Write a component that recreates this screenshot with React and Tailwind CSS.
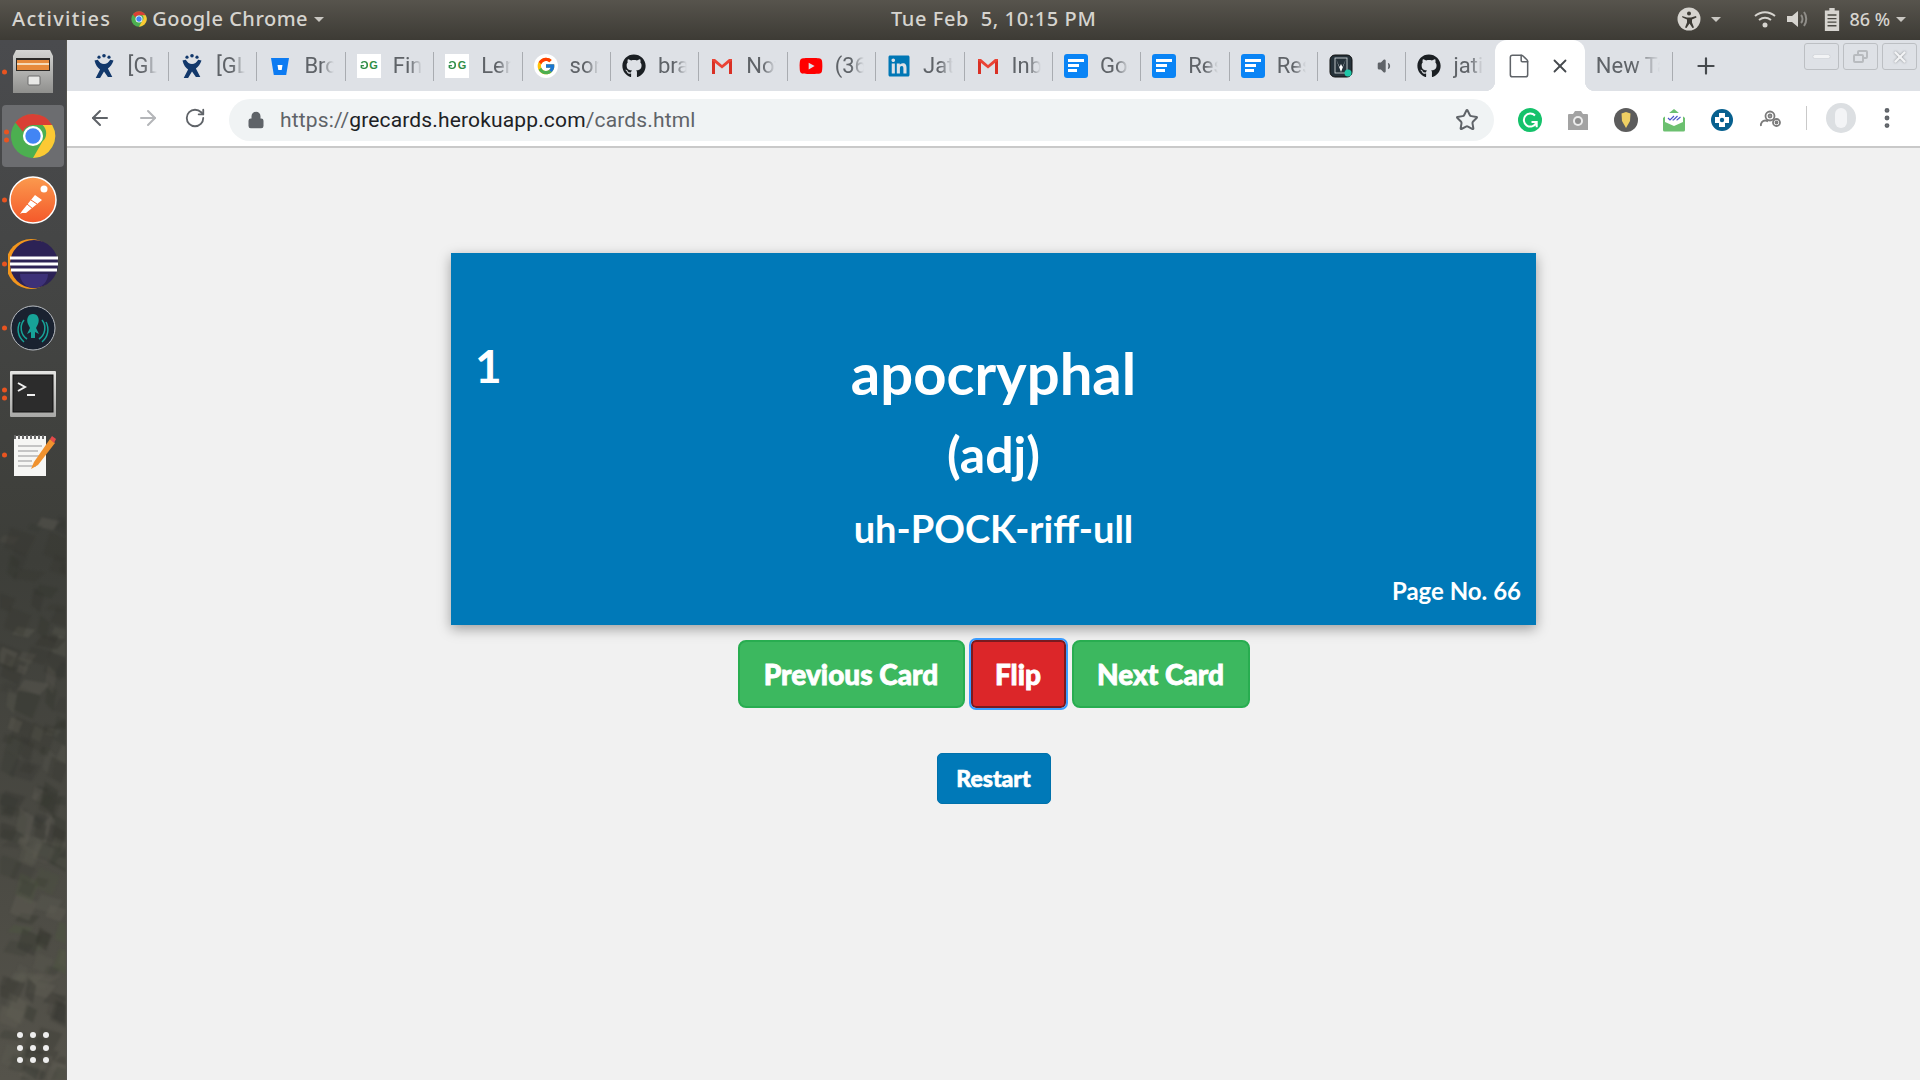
import React from 'react';
import { ArrowLeft, ArrowRight, RotateCw, Star, Plus, X, MoreVertical, Lock, File, Volume1 } from 'lucide-react';
import { FaGithub, FaYoutube, FaLinkedin } from 'react-icons/fa';
import { FcGoogle } from 'react-icons/fc';

function JiraIcon() {
  return (
    <svg viewBox="0 0 24 24" className="w-6 h-6">
      <g fill="#12386b">
        <circle cx="12" cy="1.800" r="1.800" />
        <circle cx="7" cy="3.200" r="1.600" />
        <circle cx="17" cy="3.200" r="1.600" />
        <path d="M2.500 6.500l3.300-.8c1.600 2.800 3.600 4.300 6.200 4.300s4.600-1.500 6.200-4.300l3.300.8c-1.200 3.800-3.200 6.300-5.600 8l4.400 8.500h-4.400L12 17.500 8.100 24H3.700l4.400-8.500c-2.400-1.700-4.400-4.200-5.600-9z" />
      </g>
    </svg>
  );
}

function BitbucketIcon() {
  return (
    <svg viewBox="0 0 24 24" className="w-6 h-6">
      <path d="M3 4h18l-2.800 17H5.800z" fill="#0c7bf2" />
      <path d="M9.500 11h5l-.8 5h-3.400z" fill="#fff" />
    </svg>
  );
}

function GfgIcon() {
  return (
    <span className="w-6 h-6 bg-white flex items-center justify-center gap-[1px] text-[#2f8d46] text-[11px] leading-none font-bold font-['Liberation_Sans',sans-serif]">
      <span className="-scale-x-100">G</span>
      <span>G</span>
    </span>
  );
}

function GmailIcon() {
  return (
    <svg viewBox="0 0 24 24" className="w-6 h-6">
      <path d="M2 5h3v15H2zM19 5h3v15h-3z" fill="#d93025" />
      <path d="M2 5h3l7 6 7-6h3v1.500l-10 8-10-8z" fill="#ea4335" />
    </svg>
  );
}

function DocsIcon() {
  return (
    <span className="w-6 h-6 rounded-[3px] bg-[#0a84f5] flex flex-col justify-center gap-[2px] px-[4px]">
      <span className="h-[3px] w-full bg-white" />
      <span className="h-[3px] w-[11px] bg-white" />
      <span className="h-[3px] w-[9px] bg-white" />
    </span>
  );
}

function SaavnIcon() {
  return (
    <svg viewBox="0 0 24 24" className="w-6 h-6">
      <rect x="1" y="1" width="22" height="22" rx="5" fill="#26323a" stroke="#111" />
      <path d="M7 5l5 13 5-13-3.500 8L12 10l-1.500 3z" fill="#fff" />
      <rect x="6" y="4" width="12" height="15" fill="none" stroke="#dfe4e6" strokeWidth="0.8" />
      <circle cx="19" cy="19" r="3.500" fill="#1fc7a8" />
    </svg>
  );
}

const tabs = [
  { icon: <JiraIcon />, text: '[GL' },
  { icon: <JiraIcon />, text: '[GL' },
  { icon: <BitbucketIcon />, text: 'Browse' },
  { icon: <GfgIcon />, text: 'Find the' },
  { icon: <GfgIcon />, text: 'Length' },
  { icon: <FcGoogle className="w-6 h-6 bg-white rounded-full p-[2px]" />, text: 'sort' },
  { icon: <FaGithub className="w-6 h-6 text-[#1b1f23]" />, text: 'branch' },
  { icon: <GmailIcon />, text: 'Notes' },
  { icon: <FaYoutube className="w-6 h-6 text-[#f00]" />, text: '(36) You' },
  { icon: <FaLinkedin className="w-6 h-6 text-[#0077b5]" />, text: 'Jatin' },
  { icon: <GmailIcon />, text: 'Inbox' },
  { icon: <DocsIcon />, text: 'Google' },
  { icon: <DocsIcon />, text: 'Resume' },
  { icon: <DocsIcon />, text: 'Resume' },
  { icon: <SaavnIcon />, speaker: true },
  { icon: <FaGithub className="w-6 h-6 text-[#1b1f23]" />, text: 'jatin' },
];

function Tab({ tab, last }) {
  return (
    <div className="relative w-[88.4px] h-full shrink-0 flex items-center pl-[11px] pr-[12px]">
      <span className="w-6 flex justify-center shrink-0">{tab.icon}</span>
      {tab.speaker ? (
        <Volume1 className="ml-[24px] w-[18px] h-[18px] text-[#5f6368]" fill="#5f6368" />
      ) : (
        <span className="ml-[12px] overflow-hidden whitespace-nowrap text-[22px] text-[#5f6368] [mask-image:linear-gradient(to_right,black_55%,transparent)]">
          {tab.text}
        </span>
      )}
      {!last && <span className="absolute right-0 top-[12px] h-[29px] w-px bg-[#a9acb1]" />}
    </div>
  );
}

function WindowButton({ children }) {
  return (
    <span className="w-[35px] h-[27px] border border-[#bcbfc3] rounded-[3px] flex items-center justify-center">
      {children}
    </span>
  );
}

function TabStrip() {
  return (
    <div className="h-[51px] bg-[#dee1e6] flex items-stretch pl-[13.600px] font-['Roboto',sans-serif]">
      {tabs.map((tab, i) => (
        <Tab key={i} tab={tab} last={i === tabs.length - 1} />
      ))}
      <div className="relative w-[90px] shrink-0 bg-white rounded-t-[12px] flex items-center">
        <span className="absolute -left-[10px] bottom-0 w-[10px] h-[10px] bg-[radial-gradient(circle_at_0_0,#dee1e6_10px,#ffffff_10.500px)]" />
        <span className="absolute -right-[10px] bottom-0 w-[10px] h-[10px] bg-[radial-gradient(circle_at_100%_0,#dee1e6_10px,#ffffff_10.500px)]" />
        <File className="ml-[11px] w-[26px] h-[26px] text-[#5f6368]" strokeWidth={1.4} />
        <X className="ml-[17px] w-[22px] h-[22px] text-[#45494d]" strokeWidth={2} />
      </div>
      <div className="relative w-[88px] shrink-0 flex items-center pl-[11px]">
        <span className="overflow-hidden whitespace-nowrap w-[64px] text-[22px] text-[#5f6368] [mask-image:linear-gradient(to_right,black_60%,transparent)]">
          New Tab
        </span>
        <span className="absolute right-0 top-[12px] h-[29px] w-px bg-[#a9acb1]" />
      </div>
      <Plus className="self-center ml-[20px] w-[26px] h-[26px] text-[#45494d]" strokeWidth={2} />
      <div className="ml-auto flex gap-[4px] pt-[3px] pr-[3px] h-[30px]">
        <WindowButton>
          <span className="w-[17px] h-[3px] rounded-full bg-[#f2f3f5] shadow-[0_0_1px_#9a9da1]" />
        </WindowButton>
        <WindowButton>
          <span className="relative w-[15px] h-[13px]">
            <span className="absolute right-0 top-0 w-[11px] h-[9px] border-2 border-[#b8bbbf] rounded-[2px]" />
            <span className="absolute left-0 bottom-0 w-[11px] h-[9px] border-2 border-[#b8bbbf] rounded-[2px] bg-[#dee1e6]" />
          </span>
        </WindowButton>
        <WindowButton>
          <X className="w-[18px] h-[18px] text-[#f2f3f5] drop-shadow-[0_0_1px_#8a8d91]" strokeWidth={3} />
        </WindowButton>
      </div>
    </div>
  );
}

function Extensions() {
  return (
    <div className="flex items-center gap-[24px] ml-[24px]">
      <svg viewBox="0 0 24 24" className="w-6 h-6">
        <circle cx="12" cy="12" r="12" fill="#15c26b" />
        <path d="M17 7.500a6.500 6.500 0 1 0 1.200 7.500M13.500 14h5.200v5.200" fill="none" stroke="#fff" strokeWidth="2" />
      </svg>
      <svg viewBox="0 0 24 24" className="w-6 h-6">
        <path d="M2 7a1 1 0 0 1 1-1h4l2-3h6l2 3h4a1 1 0 0 1 1 1v15H2z" fill="#a3a3a3" />
        <circle cx="12" cy="13" r="5" fill="#ececec" />
        <circle cx="12" cy="13" r="3" fill="#8f8f8f" />
      </svg>
      <svg viewBox="0 0 24 24" className="w-6 h-6">
        <circle cx="12" cy="12" r="12" fill="#5c5c5c" />
        <path d="M7.500 5.500L12 4l4.500 1.500-.5 7.500-4 7-4-7z" fill="#efcf63" />
      </svg>
      <svg viewBox="0 0 24 24" className="w-6 h-6">
        <path d="M1 10l11-9 11 9v12a1.500 1.500 0 0 1-1.500 1.500h-19A1.500 1.500 0 0 1 1 22z" fill="#6cc070" />
        <path d="M3 5h18v9l-9 4-9-4z" fill="#fff" />
        <path d="M6 10l2 2 4-4M10.500 12l1 0 4-4M14.500 12h.5l3.500-3" fill="none" stroke="#4a55c8" strokeWidth="1.200" />
      </svg>
      <svg viewBox="0 0 24 24" className="w-6 h-6">
        <circle cx="12" cy="12" r="11" fill="#07608f" />
        <path d="M9 5h6v4h4v6h-4v4H9v-4H5V9h4z" fill="#fff" />
        <circle cx="12" cy="12" r="2.200" fill="#07608f" />
      </svg>
      <svg viewBox="0 0 24 24" className="w-6 h-6" fill="none" stroke="#7b7b7b" strokeWidth="1.800">
        <circle cx="12" cy="8" r="4.500" />
        <circle cx="12" cy="8" r="1.500" />
        <circle cx="18.500" cy="14.500" r="3.500" />
        <circle cx="18.500" cy="14.500" r="1" />
        <path d="M3 18a4.500 4.500 0 0 1 4.500-5.500 4.500 4.500 0 0 1 2.500 1" />
      </svg>
    </div>
  );
}

function Toolbar() {
  return (
    <div className="h-[57px] bg-white border-b-2 border-[#c9c9c9] flex items-center pl-[21px] pr-[18px] pt-[3px] font-['Roboto',sans-serif]">
      <ArrowLeft className="w-[24px] h-[24px] text-[#5f6368] -translate-y-[2px]" strokeWidth={2} />
      <ArrowRight className="ml-[24px] w-[24px] h-[24px] text-[#b4b6b9] -translate-y-[2px]" strokeWidth={2} />
      <RotateCw className="ml-[24px] w-[22px] h-[22px] text-[#5f6368] -translate-y-[2px]" strokeWidth={2} />
      <div className="ml-[23px] w-[1265px] h-[42px] rounded-full bg-[#f0f3f4] flex items-center pl-[18px] pr-[15px]">
        <Lock className="w-[18px] h-[18px] text-[#5f6368]" fill="#5f6368" strokeWidth={2} />
        <span className="ml-[15px] pt-[2px] text-[21px] text-[#5f6368] whitespace-nowrap tracking-[0.15px]">
          https://<span className="text-[#202124]">grecards.herokuapp.com</span>/cards.html
        </span>
        <Star className="ml-auto w-[24px] h-[24px] text-[#5f6368]" strokeWidth={2} />
      </div>
      <Extensions />
      <span className="ml-[24px] w-px h-[24px] bg-[#c9c9c9] -translate-y-[2px]" />
      <span className="ml-[19px] w-[30px] h-[30px] rounded-full bg-[#dcdfe2] flex items-center justify-center -translate-y-[2px]">
        <span className="w-[12px] h-[20px] rounded-full bg-[#f3f4f6]" />
      </span>
      <MoreVertical className="ml-[18px] w-[26px] h-[26px] text-[#5f6368] -translate-y-[2px]" strokeWidth={2.500} />
    </div>
  );
}

function TopBar() {
  return (
    <div className="h-10 shrink-0 bg-gradient-to-b from-[#57544d] to-[#3d3b35] flex items-center pl-[12px] pr-[14px] pb-[2px] text-[#d6d4cf] text-[20px] font-medium font-['Noto_Sans',sans-serif]">
      <span className="tracking-[1.300px]">Activities</span>
      <ChromeLogo className="ml-[20px] w-[16px] h-[16px]" />
      <span className="ml-[5px] tracking-[0.500px]">Google Chrome</span>
      <span className="ml-[6px] w-0 h-0 border-x-[5px] border-x-transparent border-t-[5px] border-t-[#c9c7c2]" />
      <span className="absolute left-[891px] whitespace-nowrap tracking-[0.600px]">Tue Feb&nbsp; 5, 10:15 PM</span>
      <svg viewBox="0 0 24 24" className="ml-auto w-[24px] h-[24px]">
        <circle cx="12" cy="12" r="11.500" fill="#d6d4cf" />
        <path d="M12 4.500a2 2 0 1 1 0 4 2 2 0 0 1 0-4zM5 9l5 1.500h4L19 9l.500 1.500-4.500 2v3l2 5-1.500.500-3-4.500-3 4.500-1.500-.500 2-5v-3l-4.500-2z" fill="#3d3b35" />
      </svg>
      <span className="ml-[10px] w-0 h-0 border-x-[5px] border-x-transparent border-t-[5px] border-t-[#c9c7c2]" />
      <svg viewBox="0 0 24 24" className="ml-[32px] w-[24px] h-[24px]" fill="none" stroke="#d6d4cf" strokeWidth="2">
        <path d="M2 9c6-5 14-5 20 0M6 13c4-3 8-3 12 0" />
        <circle cx="12" cy="18" r="2.500" fill="#d6d4cf" stroke="none" />
      </svg>
      <svg viewBox="0 0 24 24" className="ml-[8px] w-[24px] h-[24px]" fill="none">
        <path d="M2 9h5l6-5v16l-6-5H2z" fill="#d6d4cf" />
        <path d="M16 8c2 2 2 6 0 8M19 5c3 4 3 10 0 14" stroke="#8f8d88" strokeWidth="2" />
      </svg>
      <svg viewBox="0 0 20 28" className="ml-[14px] w-[18px] h-[25px]" fill="none">
        <path d="M7 1h6v3h5v23H2V4h5z" fill="#d6d4cf" />
        <path d="M5 9h10M5 13h10M5 17h10M5 21h10" stroke="#4a4842" strokeWidth="1.500" />
      </svg>
      <span className="ml-[8px] text-[18px]">86 %</span>
      <span className="ml-[6px] w-0 h-0 border-x-[5px] border-x-transparent border-t-[5px] border-t-[#c9c7c2]" />
    </div>
  );
}

function ChromeLogo({ className }) {
  return (
    <svg viewBox="0 0 48 48" className={className}>
      <circle cx="24" cy="24" r="23" fill="#4caf50" />
      <path d="M24 1a23 23 0 0 1 20 11.500H24a11.500 11.500 0 0 0-10.500 7L5.500 10A23 23 0 0 1 24 1z" fill="#d93f35" />
      <path d="M44 12.500A23 23 0 0 1 24 47l10-17.500a11.500 11.500 0 0 0 0-17z" fill="#fcc934" />
      <circle cx="24" cy="24" r="10.500" fill="#fff" />
      <circle cx="24" cy="24" r="8" fill="#4285f4" />
    </svg>
  );
}

// rocky wallpaper seen through the dock
function DockTexture() {
  const shapes = [];
  let seed = 17;
  const rnd = () => {
    seed = (seed * 16807) % 2147483647;
    return seed / 2147483647;
  };
  for (let i = 0; i < 150; i++) {
    const x = rnd() * 67;
    const y = 470 + rnd() * 570;
    const w = 8 + rnd() * 18;
    const h = 8 + rnd() * 26;
    const light = rnd() > 0.7;
    const green = y > 820 && y < 930 && rnd() > 0.55;
    shapes.push(
      <polygon
        key={i}
        points={`${x},${y} ${x + w},${y + h * 0.3} ${x + w * 0.6},${y + h} ${x - w * 0.3},${y + h * 0.7}`}
        fill={green ? '#4d573f' : light ? '#5f5d54' : '#34352f'}
        opacity={0.2 + rnd() * 0.25}
      />
    );
  }
  return (
    <svg viewBox="0 0 67 1040" className="absolute inset-0 w-full h-full blur-[1px]">
      {shapes}
    </svg>
  );
}

function DockItem({ dots = 1, children, className }) {
  return (
    <div className={`relative flex items-center justify-center ${className}`}>
      <span className="absolute left-[2px] top-1/2 -translate-y-1/2 flex flex-col gap-[3px]">
        {Array.from({ length: dots }).map((_, i) => (
          <span key={i} className="w-[5px] h-[5px] rounded-full bg-[#e95420]" />
        ))}
      </span>
      {children}
    </div>
  );
}

function Dock() {
  return (
    <div className="relative w-[67px] shrink-0 overflow-hidden bg-gradient-to-b from-[#4a4b4e] via-[#3d3e39] to-[#55534b] border-r border-[#55544f] flex flex-col items-stretch">
      <DockTexture />
      <DockItem className="mt-[10px] h-[43px]">
        <svg viewBox="0 0 40 43" className="w-[40px] h-[43px]">
          <defs>
            <linearGradient id="cab" x1="0" y1="0" x2="0" y2="1">
              <stop offset="0" stopColor="#d5d5d3" />
              <stop offset="1" stopColor="#8f8f8d" />
            </linearGradient>
          </defs>
          <path d="M3 0h34l3 6v37H0V6z" fill="url(#cab)" />
          <rect x="3" y="8" width="34" height="13" fill="#2c2a28" />
          <rect x="4" y="10" width="32" height="10" fill="#e78a3c" />
          <rect x="4" y="13" width="32" height="2" fill="#f5d9b8" />
          <rect x="15" y="26" width="12" height="9" rx="1" fill="#e8e8e6" stroke="#6b6b6b" />
        </svg>
      </DockItem>
      <DockItem dots={2} className="mt-[12px] mx-[2px] h-[62px] rounded-[4px] bg-[#6c6d70]">
        <ChromeLogo className="w-[46px] h-[46px]" />
      </DockItem>
      <DockItem className="mt-[9px] h-[48px]">
        <svg viewBox="0 0 48 48" className="w-[48px] h-[48px]">
          <defs>
            <linearGradient id="pm" x1="0" y1="0" x2="0" y2="1">
              <stop offset="0" stopColor="#fb9a4e" />
              <stop offset="1" stopColor="#f4582a" />
            </linearGradient>
          </defs>
          <circle cx="24" cy="24" r="23" fill="url(#pm)" stroke="#fff" strokeWidth="1.500" />
          <path d="M11 38l2-3 13-16 7 5-16 13-4 0z" fill="#fff" />
          <circle cx="35" cy="13" r="3.500" fill="#fff" />
          <path d="M18 28l6 5M22 24l6 4" stroke="#f4682f" strokeWidth="1" />
        </svg>
      </DockItem>
      <DockItem className="mt-[14px] h-[52px]">
        <svg viewBox="0 0 50 52" className="w-[50px] h-[52px]">
          <circle cx="23" cy="26" r="25" fill="#f2961d" />
          <circle cx="26" cy="26" r="24" fill="#2c2255" />
          <path d="M26 50a14 14 0 0 0 14-14H12a14 14 0 0 0 14 14z" fill="#3d3178" />
          <path d="M2 20h48M2 26h48M3 32h46" stroke="#fff" strokeWidth="3" />
        </svg>
      </DockItem>
      <DockItem className="mt-[15px] h-[46px]">
        <svg viewBox="0 0 46 46" className="w-[46px] h-[46px]" fill="none">
          <circle cx="23" cy="23" r="22" fill="#1a2230" stroke="#b8bcc2" strokeWidth="1" />
          <path d="M14 15a13 13 0 0 0 3 19M32 15a13 13 0 0 1-3 19M10 17a16 16 0 0 0 4 20M36 17a16 16 0 0 1-4 20" stroke="#17a398" strokeWidth="1.500" />
          <path d="M23 9c5 0 7 5 5 10l-2 4 3 6-4-2v6h-4v-6l-4 2 3-6-2-4c-2-5 0-10 5-10z" fill="#17a398" />
        </svg>
      </DockItem>
      <DockItem dots={2} className="mt-[20px] h-[46px]">
        <svg viewBox="0 0 46 46" className="w-[46px] h-[46px]">
          <defs>
            <linearGradient id="term" x1="0" y1="0" x2="0" y2="1">
              <stop offset="0" stopColor="#e4e4e2" />
              <stop offset="1" stopColor="#a8a8a6" />
            </linearGradient>
          </defs>
          <rect x="0" y="0" width="46" height="46" rx="1" fill="url(#term)" />
          <rect x="3" y="4" width="40" height="37" fill="#2c2c2c" stroke="#111" />
          <path d="M8 12l7 4-7 4" fill="none" stroke="#f0f0f0" strokeWidth="2" />
          <path d="M17 24h8" stroke="#f0f0f0" strokeWidth="2" />
        </svg>
      </DockItem>
      <DockItem className="mt-[15px] h-[45px]">
        <svg viewBox="0 0 45 45" className="w-[45px] h-[45px]">
          <rect x="3" y="4" width="32" height="40" fill="#f6f6f4" />
          <path d="M3 5h32" stroke="#666" strokeWidth="4" strokeDasharray="2 2" />
          <path d="M7 14h24M7 19h20M7 24h22M7 29h14M7 34h18" stroke="#b5b5b5" strokeWidth="1.500" />
          <path d="M20 37l3-7L39 7l5 4-17 22z" fill="#f0922e" />
          <path d="M39 7l2-3 4 3-2 4z" fill="#e34a4a" />
        </svg>
      </DockItem>
      <div className="relative mt-auto mb-[17px] ml-[17px] grid grid-cols-3 gap-[6.500px] w-[32px]">
        {Array.from({ length: 9 }).map((_, i) => (
          <span key={i} className="w-[6px] h-[6px] rounded-full bg-[#eeeeee]" />
        ))}
      </div>
    </div>
  );
}

function CardPage() {
  return (
    <div className="flex-1 bg-[#f1f1f1] flex flex-col items-center pt-[105px] font-['Lato',sans-serif]">
      <div className="w-[1085px] h-[372px] bg-[#0079b8] text-white shadow-[0_4px_12px_rgba(0,0,0,0.35)] grid grid-cols-[1fr_auto_1fr] px-[15px]">
        <div className="pt-[85px] pl-[9px] text-[46px] font-bold leading-[56px]">1</div>
        <div className="flex flex-col items-center pt-[85px]">
          <div className="text-[58px] font-bold leading-[70px]">apocryphal</div>
          <div className="mt-[17px] text-[50px] font-bold leading-[58px]">(adj)</div>
          <div className="mt-[22px] text-[38px] font-bold leading-[46px]">uh-POCK-riff-ull</div>
        </div>
        <div className="self-end justify-self-end pb-[18px] text-[24px] font-bold leading-[32px]">Page No. 66</div>
      </div>
      <div className="mt-[15px] flex gap-[6px] text-white font-black text-[28px] [-webkit-text-stroke:0.8px_white]">
        <button className="w-[227px] h-[68px] rounded-[8px] bg-[#3cb85f] border-2 border-[#28ad50]">Previous Card</button>
        <button className="w-[95px] h-[68px] rounded-[5px] bg-[#dc2629] border-2 border-[#7a1a1f] outline-2 outline-[#3b9cff]">Flip</button>
        <button className="w-[178px] h-[68px] rounded-[8px] bg-[#3cb85f] border-2 border-[#28ad50]">Next Card</button>
      </div>
      <button className="mt-[45px] w-[114px] h-[51px] rounded-[5px] bg-[#0079b8] border border-[#0071ab] text-white font-black text-[23px] [-webkit-text-stroke:0.6px_white]">
        Restart
      </button>
    </div>
  );
}

export default function App() {
  return (
    <div className="relative w-[1920px] h-[1080px] overflow-hidden flex flex-col">
      <TopBar />
      <div className="flex-1 flex min-h-0">
        <Dock />
        <div className="flex-1 flex flex-col min-w-0">
          <TabStrip />
          <Toolbar />
          <CardPage />
        </div>
      </div>
    </div>
  );
}
